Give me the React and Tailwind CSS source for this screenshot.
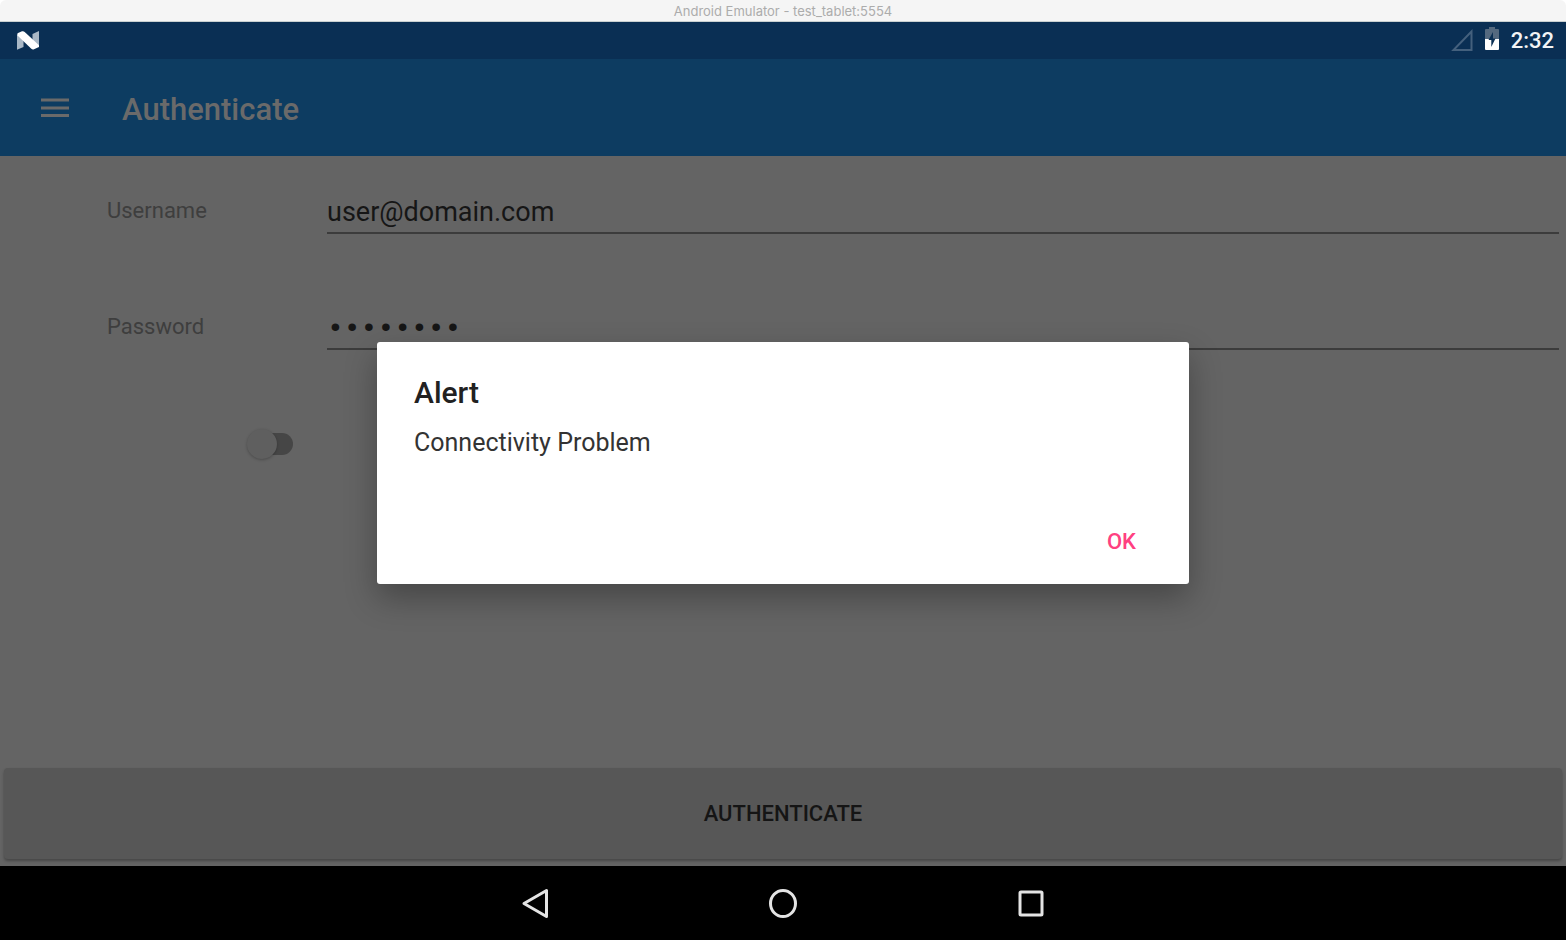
function NougatIcon() {
  return (
    <svg width="22" height="19" viewBox="0 0 22 19" aria-hidden="true">
      <path d="M0 3 L6.500 8 V16 L0 18.800 Z" fill="#a9b8c6" />
      <path d="M15.500 3 L22 0 V15 L15.500 11 Z" fill="#a9b8c6" />
      <path d="M0.500 2.300 L5 0.300 Q6.500 -0.200 7.700 0.900 L22 14.200 V16 L17 18.300 Q15.500 18.900 14.300 17.800 L0.500 4.500 Z" fill="#fff" />
    </svg>
  );
}

function SignalIcon() {
  return (
    <svg width="22" height="24" viewBox="0 0 22 24" aria-hidden="true">
      <path d="M2.500 21 H20.500 V2.500 Z" fill="none" stroke="#44607d" strokeWidth="2" />
    </svg>
  );
}

function BatteryIcon() {
  return (
    <svg width="14" height="27" viewBox="0 0 14 27" className="block" aria-hidden="true">
      <path d="M0 3 Q0 2 1 2 H4 V0 H10 V2 H13 Q14 2 14 3 V12 H0 Z" fill="#54697f" />
      <path d="M0 12 H14 V22 Q14 23 13 23 H1 Q0 23 0 22 Z" fill="#fff" />
      <path d="M8 5 L3.500 13 H6.300 V20 L10.500 11.500 H8 Z" fill="#0a2f54" />
    </svg>
  );
}

function WindowTitle() {
  return (
    <header className="bg-white">
      <div className="flex h-[22px] items-center justify-center rounded-t-md border-b border-[#c9d0d0] bg-[#f5f5f5] font-['Inter',sans-serif] text-[13px] leading-4 text-[#acacac]">
        Android Emulator - test_tablet:5554
      </div>
    </header>
  );
}

function StatusBar() {
  return (
    <div className="flex h-[37px] items-center bg-[#0a2f54] pr-3 pl-[17px]">
      <NougatIcon />
      <div className="ml-auto flex items-center">
        <SignalIcon />
        <span className="mr-3 ml-3">
          <BatteryIcon />
        </span>
        <span className="text-[22px] leading-6 font-medium text-[#f2f4f6]">2:32</span>
      </div>
    </div>
  );
}

function AppBar() {
  return (
    <div className="flex h-[97px] items-center bg-[#0d3c61] pl-[41px] text-[#6a6a6a]">
      <button type="button" aria-label="Open menu" className="mr-[53px]">
        <svg width="28" height="20" viewBox="0 0 28 20" className="block" aria-hidden="true">
          <path d="M0 2 H28 M0 10 H28 M0 17.500 H28" stroke="currentColor" strokeWidth="3" />
        </svg>
      </button>
      <h1 className="pt-1 text-[31px] leading-9 font-medium">Authenticate</h1>
    </div>
  );
}

function Field({ id, label, type, value }) {
  return (
    <div className="flex h-[110px] items-center pr-[7px] pl-[107px]">
      <label htmlFor={id} className="w-[220px] shrink-0 text-[22px] leading-7 text-[#3e3e3e]">
        {label}
      </label>
      <input
        id={id}
        type={type}
        defaultValue={value}
        className={
          "h-[46px] min-w-0 flex-1 border-b-2 border-[#3c3c3c] bg-transparent pt-1 leading-9 text-[#161616] outline-none " +
          (type === "password" ? "font-['Liberation_Mono',monospace] text-[28px]" : "text-[27px]")
        }
      />
    </div>
  );
}

function AlertDialog() {
  return (
    <div className="absolute inset-0 flex items-center justify-center">
      <div
        role="alertdialog"
        aria-labelledby="alert-title"
        aria-describedby="alert-text"
        className="flex w-[812px] max-w-full flex-col rounded-[3px] bg-white px-[37px] pt-[33px] pb-[22px] shadow-[0_14px_32px_0_rgba(0,0,0,0.3)]"
      >
        <h2 id="alert-title" className="text-[30px] leading-9 font-medium text-[#212121]">
          Alert
        </h2>
        <p id="alert-text" className="mt-4 text-[25px] leading-8 text-[#333333]">
          Connectivity Problem
        </p>
        <button
          type="button"
          className="mt-[63px] self-end px-4 py-2 text-[22px] leading-6 font-medium text-[#ff4081]"
        >
          OK
        </button>
      </div>
    </div>
  );
}

function NavBar() {
  return (
    <nav className="flex h-[74px] items-center justify-center gap-[212px] bg-black">
      <button type="button" aria-label="Back">
        <svg width="36" height="36" viewBox="0 0 36 36" className="block" aria-hidden="true">
          <path d="M29.500 5.500 V31.500 L7 18.500 Z" fill="none" stroke="#e4e4e4" strokeWidth="3" strokeLinejoin="round" />
        </svg>
      </button>
      <button type="button" aria-label="Home">
        <svg width="36" height="36" viewBox="0 0 36 36" className="block" aria-hidden="true">
          <ellipse cx="18" cy="18.500" rx="12.500" ry="13" fill="none" stroke="#e4e4e4" strokeWidth="3" />
        </svg>
      </button>
      <button type="button" aria-label="Recent apps">
        <svg width="36" height="36" viewBox="0 0 36 36" className="block" aria-hidden="true">
          <rect x="7" y="7" width="22" height="23" rx="1" fill="none" stroke="#e4e4e4" strokeWidth="3" />
        </svg>
      </button>
    </nav>
  );
}

export default function App() {
  return (
    <div className="flex min-h-screen flex-col bg-[#646464] font-['Roboto',sans-serif]">
      <WindowTitle />
      <StatusBar />
      <div className="relative flex flex-1 flex-col">
        <AppBar />
        <main className="flex flex-1 flex-col">
          <form className="flex flex-1 flex-col gap-[6px]">
            <Field id="username" label="Username" type="text" value="user@domain.com" />
            <Field id="password" label="Password" type="password" value="password" />
            <div className="flex h-[112px] items-center pl-[247px]">
              <input
                type="checkbox"
                role="switch"
                aria-label="Remember me"
                className="flex h-[30px] w-[46px] appearance-none items-center before:z-10 before:h-[30px] before:w-[30px] before:shrink-0 before:rounded-full before:bg-[#5f5f5f] before:shadow-[0_1px_3px_rgba(0,0,0,0.25)] after:-ml-[18px] after:h-[22px] after:w-[34px] after:rounded-full after:bg-[#464646]"
              />
            </div>
            <button
              type="button"
              className="mx-1 mt-auto mb-[7px] h-[91px] rounded-[4px] bg-[#575757] text-[22px] font-medium text-[#151515] shadow-[0_2px_3px_rgba(0,0,0,0.3)]"
            >
              AUTHENTICATE
            </button>
          </form>
        </main>
        <AlertDialog />
      </div>
      <NavBar />
    </div>
  );
}
